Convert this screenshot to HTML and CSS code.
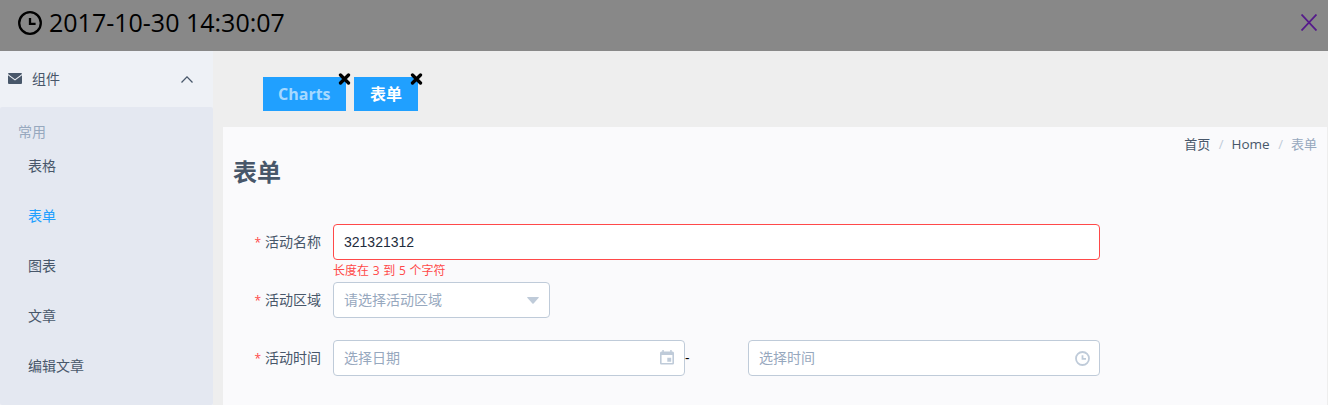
FILE: index.html
```html
<!DOCTYPE html>
<html lang="zh-CN">
<head>
<meta charset="utf-8">
<title>表单</title>
<link rel="stylesheet" href="styles.css">
</head>
<body>
<header class="topbar">
  <div class="clock">
    <svg class="clock-icon" viewBox="0 0 24 24"><circle cx="12" cy="12" r="10.8"/><path d="M12 7v5.800h5.600"/></svg>
    <time class="clock-text">2017-10-30 14:30:07</time>
  </div>
  <svg class="close-icon" viewBox="0 0 16 17"><path d="M.5.5l15 16M15.500.5l-15 16"/></svg>
</header>
<div class="layout">
  <nav class="sidebar">
    <div class="menu-title">
      <svg class="mail-icon" viewBox="0 0 14 11"><path class="mail-body" d="M1 0h12q1 0 1 1L7 6.200 0 1q0-1 1-1zM0 2.300l4 3L7 7.400l3-2.100 4-3V10q0 1-1 1H1q-1 0-1-1z"/></svg>
      <span>组件</span>
      <svg class="arrow-icon" viewBox="0 0 12 7"><path d="M.5 6.500L6 .9l5.500 5.600"/></svg>
    </div>
    <div class="submenu">
      <div class="group">常用</div>
      <a class="item">表格</a>
      <a class="item active">表单</a>
      <a class="item">图表</a>
      <a class="item">文章</a>
      <a class="item">编辑文章</a>
    </div>
  </nav>
  <main class="main">
    <div class="tabs">
      <div class="tab muted"><span class="tab-text">Charts</span><svg class="tab-close" viewBox="0 0 12 12"><path d="M2 2l8 8M10 2l-8 8"/></svg></div>
      <div class="tab"><span class="tab-text">表单</span><svg class="tab-close" viewBox="0 0 12 12"><path d="M2 2l8 8M10 2l-8 8"/></svg></div>
    </div>
    <section class="panel">
      <div class="crumbs"><span>首页</span><i class="slash">/</i><span class="home">Home</span><i class="slash">/</i><span class="current">表单</span></div>
      <h1 class="title">表单</h1>
      <form class="form">
        <div class="row">
          <label class="label"><span class="star">*</span>活动名称</label>
          <div class="field wide">
            <input class="input invalid" value="321321312">
            <div class="error">长度在 3 到 5 个字符</div>
          </div>
        </div>
        <div class="row">
          <label class="label"><span class="star">*</span>活动区域</label>
          <div class="box select"><input class="bare" placeholder="请选择活动区域"><svg class="caret" viewBox="0 0 12 7"><path d="M.7 0h10.600q.8 0 .4.800L6.600 6.500q-.6.600-1.200 0L.3.800Q-.1 0 .7 0z"/></svg></div>
        </div>
        <div class="row">
          <label class="label"><span class="star">*</span>活动时间</label>
          <div class="box half"><input class="bare" placeholder="选择日期"><svg class="date-icon" viewBox="0 0 14 15"><path fill-rule="evenodd" d="M2.300 0h1.500v1.500h6.400V0h1.500v1.500h.8Q14 1.500 14 3v10.200q0 1.300-1.300 1.300H1.300Q0 14.500 0 13.200V3q0-1.500 1.500-1.500h.8zM1.600 5v7.900h10.800V5zM7.300 7.800h3.900v3.900H7.300z"/></svg></div>
          <div class="dash">-</div>
          <div class="box half"><input class="bare" placeholder="选择时间"><svg class="time-icon" viewBox="0 0 15 15"><circle cx="7.500" cy="7.500" r="6.500"/><path d="M7.500 4.200v3.700H11"/></svg></div>
        </div>
      </form>
    </section>
  </main>
</div>
</body>
</html>
```
FILE: styles.css
```css
* { box-sizing: border-box; }
body {
  margin: 0;
  height: 405px;
  overflow: hidden;
  display: flex;
  flex-direction: column;
  background: #eee;
  color: #48576a;
  font: 14px/20px "Open Sans", "Noto Sans CJK SC", sans-serif;
}
svg { display: block; flex: none; }
.topbar {
  height: 51px;
  flex: none;
  display: flex;
  justify-content: space-between;
  padding: 0 11px 0 18px;
  background: #888;
}
.clock { display: flex; color: #000; }
.clock-icon { width: 24px; height: 24px; margin: 11px 7px 0 0; fill: none; stroke: #000; stroke-width: 2.3; }
.clock-text { font-size: 25px; line-height: 45px; white-space: nowrap; }
.close-icon { width: 16px; height: 17px; margin-top: 14px; fill: none; stroke: #551a8b; stroke-width: 1.8; }
.layout { flex: 1; display: flex; min-height: 0; }
.sidebar { width: 213px; flex: none; display: flex; flex-direction: column; background: #eef1f6; }
.menu-title { height: 56px; flex: none; display: flex; align-items: center; padding: 0 20px 0 8px; }
.mail-icon { width: 14px; height: 11px; margin: -1px 10px 0 0; }
.mail-body { fill: #48576a; }
.arrow-icon { width: 12px; height: 7px; margin-left: auto; fill: none; stroke: #48576a; stroke-width: 1.3; }
.submenu { flex: 1; padding-top: 15px; border-radius: 2px; background: #e4e8f1; }
.group { height: 19px; padding-left: 18px; color: #97a8be; }
.item { display: block; height: 50px; line-height: 50px; padding-left: 28px; }
.item.active { color: #20a0ff; }
.main { flex: 1; display: flex; flex-direction: column; padding: 0 1px 0 10px; }
.tabs { height: 76px; flex: none; display: flex; gap: 8px; padding: 26px 0 0 40px; }
.tab { position: relative; height: 34px; padding: 0 16px; background: #20a0ff; color: #fff; font-size: 16px; font-weight: 700; line-height: 34px; }
.muted { width: 83px; padding-left: 15px; color: #a6d9ff; }
.tab-close { position: absolute; top: -4px; right: -5px; width: 13px; height: 12px; fill: none; stroke: #000; stroke-width: 3.3; stroke-linecap: round; }
.panel { flex: 1; padding: 7px 10px 0; background: #fafafc; }
.crumbs { display: flex; justify-content: flex-end; font-size: 13px; }
.home { font-size: 13.500px; }
.slash { margin: 0 8px 0 8.500px; color: #bfcbd9; font-style: normal; }
.current { color: #97a8be; }
.title { margin: 0; font-size: 24px; line-height: 36px; font-weight: 700; }
.form { display: flex; flex-direction: column; gap: 22px; padding-top: 34px; }
.row { height: 36px; display: flex; }
.label { width: 100px; padding-right: 12px; text-align: right; line-height: 36px; }
.star { margin-right: 4px; color: #ff4949; font-size: 12px; }
.wide { width: 767px; }
.input, .box { height: 36px; border: 1px solid #bfcbd9; border-radius: 4px; background: #fff; }
.input { display: block; width: 100%; padding: 0 10px; color: #1f2d3d; font: 14px "Liberation Sans", sans-serif; }
.invalid { border-color: #ff4949; }
.error { padding-top: 1px; color: #ff4949; font-size: 12px; word-spacing: .6px; }
.box { display: flex; align-items: center; padding: 0 10px; }
.select { width: 217px; }
.half { width: 352px; }
.bare { flex: 1; min-width: 0; height: 34px; padding: 0 0 2px; border: 0; background: none; font: 14px "Noto Sans CJK SC", sans-serif; }
.bare::placeholder { color: #97a8be; opacity: 1; }
.caret { width: 12px; height: 7px; fill: #bfcbd9; }
.date-icon { width: 14px; height: 15px; margin-top: -1px; fill: #bfcbd9; }
.time-icon { width: 15px; height: 15px; margin-right: -1px; fill: none; stroke: #bfcbd9; stroke-width: 1.8; }
.dash { width: 63px; color: #000; line-height: 36px; }
```
